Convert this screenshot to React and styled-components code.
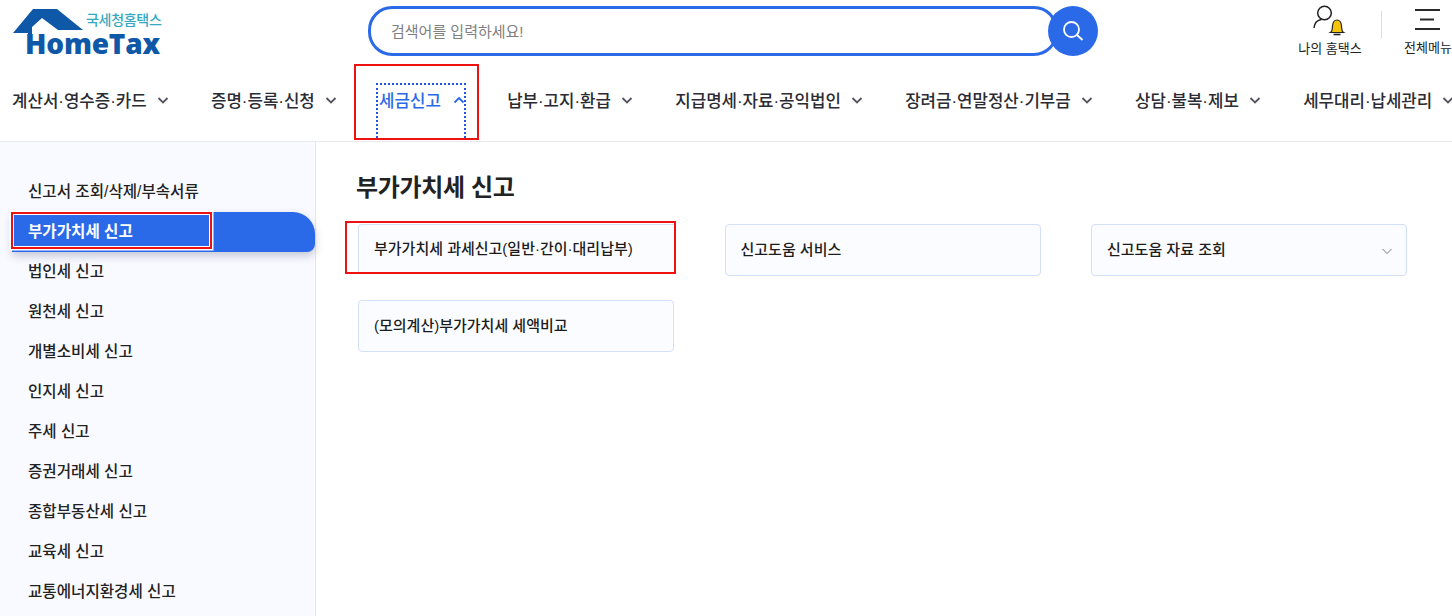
import React from "react";
import styled, { createGlobalStyle } from "styled-components";

const Global = createGlobalStyle`
  html, body { margin: 0; padding: 0; background: #fff; }
  body { font-family: "Liberation Sans", "Noto Sans CJK KR", sans-serif; color: #1c1c1c; }
  * { box-sizing: border-box; }
`;
const Page = styled.div`
  width: 1452px; height: 616px; overflow: hidden; position: relative; background: #fff;
`;
const Header = styled.header`
  height: 142px; border-bottom: 1px solid #e8eaf0; display: flex; flex-direction: column;
`;
const TopBar = styled.div`
  height: 62px; display: flex; align-items: flex-start; position: relative;
`;
const Logo = styled.div`
  width: 368px; height: 62px; position: relative; flex: none;
`;
const LogoMark = styled.svg`
  position: absolute; left: 13px; top: 9px;
`;
const LogoSub = styled.span`
  position: absolute; left: 86px; top: 11px; font-size: 14px; line-height: 18px; color: #35a9c2; font-weight: 500; letter-spacing: -0.3px;
`;
const LogoName = styled.span`
  position: absolute; left: 25px; top: 29px; font-family: "Open Sans", sans-serif; font-size: 28px; line-height: 28px; font-weight: 800; color: #0f58a8; letter-spacing: -0.2px;
`;
const Search = styled.div`
  margin-top: 6px; width: 730px; height: 50px; display: flex; align-items: center; position: relative; flex: none;
`;
const SearchBox = styled.div`
  width: 690px; height: 50px; border: 3px solid #2a6ae8; border-radius: 24px; padding: 0 0 2px 20px; font-size: 15px; color: #808080; display: flex; align-items: center; background: #fff;
`;
const SearchBtn = styled.div`
  position: absolute; left: 680px; top: 0; width: 50px; height: 50px; border-radius: 50%; background: #2a6ae8; display: flex; align-items: center; justify-content: center;
`;
const Utils = styled.div`
  margin-left: auto; display: flex; align-items: flex-start; padding-top: 3px;
`;
const Util = styled.div`
  display: flex; flex-direction: column; align-items: center; font-size: 13px; line-height: 18px; color: #222; width: ${p => p.$w}px; height: 56px; gap: ${p => p.$gap}px;
  white-space: nowrap;
`;
const UtilDivider = styled.div`
  width: 1px; height: 27px; background: #dcdee3; margin: 8px 22px 0 15px;
`;
const Nav = styled.nav`
  display: flex; align-items: flex-start; padding: 0 0 0 12px; gap: 42.3px; white-space: nowrap; flex: 1;
`;
const NavItem = styled.div`
  display: flex; align-items: center; gap: ${p => (p.$active ? 12 : 10)}px; font-size: 16.8px; font-weight: 500; height: 28px; margin-top: 24px; flex: none;
  color: ${p => (p.$active ? "#2a6ae8" : "#2b2b33")};
  position: relative;
`;
const Focus = styled.span`
  position: absolute; left: -3px; right: -1px; top: -3px; height: 55px; border: 2px dotted #1f55e0; border-bottom: 0; pointer-events: none;
`;
const Body = styled.div`
  display: flex; height: 474px;
`;
const Side = styled.aside`
  width: 316px; flex: none; background: #f9faff; border-right: 1px solid #e1e6f5; padding-top: 30px; height: 100%;
`;
const SideItem = styled.div`
  height: 40px; padding: 0 0 4px 28px; display: flex; align-items: center; font-size: 15.6px; font-weight: 500;
  ${p => p.$active
    ? `background:#2a6ae8;color:#fff;border-radius:0 22px 8px 0;box-shadow:0 4px 8px rgba(60,70,110,.28);margin-left:12px;padding-left:16px;width:303px;font-weight:700;`
    : `color:#222;`}
`;
const Main = styled.main`
  flex: 1; padding: 28px 0 0 40px;
`;
const Title = styled.h2`
  margin: 0 0 18px; font-size: 24px; line-height: 36px; font-weight: 700; color: #222; letter-spacing: -0.35px;
`;
const Cards = styled.div`
  margin-left: 2px; display: grid; grid-template-columns: repeat(3, 316px); column-gap: 50.5px; row-gap: 24px;
`;
const Card = styled.div`
  height: 52px; border: 1px solid #d3e0fa; border-radius: 4px; background: #fbfcff; padding: 0 15px 4px; font-size: 15px; font-weight: 500; color: #1c1c1c; display: flex; align-items: center; justify-content: space-between;
  ${p => p.$cut && "height:48px;border-bottom:0;border-right:0;border-radius:4px 0 0 0;align-self:start;padding-bottom:2px;"}
`;
const CardArrow = styled.span`
  display: flex; margin: 5px -2px 0 0;
`;
const RedBox = styled.div`
  position: absolute; border: 2px solid #ee1111; pointer-events: none;
  left: ${p => p.$x}px; top: ${p => p.$y}px; width: ${p => p.$w}px; height: ${p => p.$h}px;
  ${p => p.$halo && "box-shadow: 0 0 0 1.5px #fff, inset 0 0 0 1px #fff;"}
`;

const Chevron = ({ up, color = "#55555f", size = 12, sw = 1.8 }) => (
  <svg width={size} height={size} viewBox="0 0 12 12" fill="none" stroke={color} strokeWidth={sw} style={{ flex: "none" }}>
    <path d={up ? "M1.5 8.500 6 4l4.500 4.500" : "M1.500 4 6 8.500 10.500 4"} />
  </svg>
);

const navItems = ["계산서·영수증·카드", "증명·등록·신청", "세금신고", "납부·고지·환급", "지급명세·자료·공익법인", "장려금·연말정산·기부금", "상담·불복·제보", "세무대리·납세관리"];
const sideItems = ["신고서 조회/삭제/부속서류", "부가가치세 신고", "법인세 신고", "원천세 신고", "개별소비세 신고", "인지세 신고", "주세 신고", "증권거래세 신고", "종합부동산세 신고", "교육세 신고", "교통에너지환경세 신고"];

export default function App() {
  return (
    <Page>
      <Global />
      <Header>
        <TopBar>
          <Logo>
            <LogoMark width="72" height="30" viewBox="0 0 72 30">
              <path d="M0 24 20 0H44L70 21H45L29 9 19 18V30H15V24Z" fill="#0f58a8" />
            </LogoMark>
            <LogoSub>국세청홈택스</LogoSub>
            <LogoName>HomeTax</LogoName>
          </Logo>
          <Search>
            <SearchBox>검색어를 입력하세요!</SearchBox>
            <SearchBtn>
              <svg width="24" height="24" viewBox="0 0 24 24" fill="none" stroke="#fff" strokeWidth="1.8">
                <circle cx="10.500" cy="10.500" r="7.500" />
                <path d="M16 16l5.500 5" />
              </svg>
            </SearchBtn>
          </Search>
          <Utils>
            <Util $w={72} $gap={4}>
              <svg width="34" height="33" viewBox="0 0 34 33" fill="none">
                <circle cx="11.500" cy="10" r="6.800" stroke="#222" strokeWidth="1.500" />
                <path d="M1 25c.5-5 3.500-8 7.500-8.500" stroke="#222" strokeWidth="1.500" />
                <path d="M17.500 29.500c1.800-1 1.800-3 2-6.500.3-4 2-6 4.500-6s4.200 2 4.500 6c.2 3.500.2 5.500 2 6.500Z" fill="#f4c40d" stroke="#222" strokeWidth="1.200" />
                <path d="M20.500 31.500h7" stroke="#222" strokeWidth="1.600" />
              </svg>
              <span>나의 홈택스</span>
            </Util>
            <UtilDivider />
            <Util $w={48} $gap={6}>
              <svg width="26" height="30" viewBox="0 0 26 30" fill="none" stroke="#2a2a2a" strokeWidth="2">
                <path d="M0 7h25M5 16.500h14M0 26h25" />
              </svg>
              <span>전체메뉴</span>
            </Util>
          </Utils>
        </TopBar>
        <Nav>
          {navItems.map((n, i) => (
            <NavItem key={n} $active={i === 2}>
              {n}
              <Chevron up={i === 2} color={i === 2 ? "#2a6ae8" : "#55555f"} />
              {i === 2 && <Focus />}
            </NavItem>
          ))}
        </Nav>
      </Header>
      <Body>
        <Side>
          {sideItems.map((s, i) => (
            <SideItem key={s} $active={i === 1}>{s}</SideItem>
          ))}
        </Side>
        <Main>
          <Title>부가가치세 신고</Title>
          <Cards>
            <Card $cut>부가가치세 과세신고(일반·간이·대리납부)</Card>
            <Card>신고도움 서비스</Card>
            <Card>
              신고도움 자료 조회
              <CardArrow><Chevron color="#777" sw={1} /></CardArrow>
            </Card>
            <Card>(모의계산)부가가치세 세액비교</Card>
          </Cards>
        </Main>
      </Body>
      <RedBox $x={354} $y={64} $w={125} $h={76} />
      <RedBox $x={11} $y={212} $w={201} $h={37} $halo />
      <RedBox $x={345} $y={221} $w={331} $h={53} />
    </Page>
  );
}
